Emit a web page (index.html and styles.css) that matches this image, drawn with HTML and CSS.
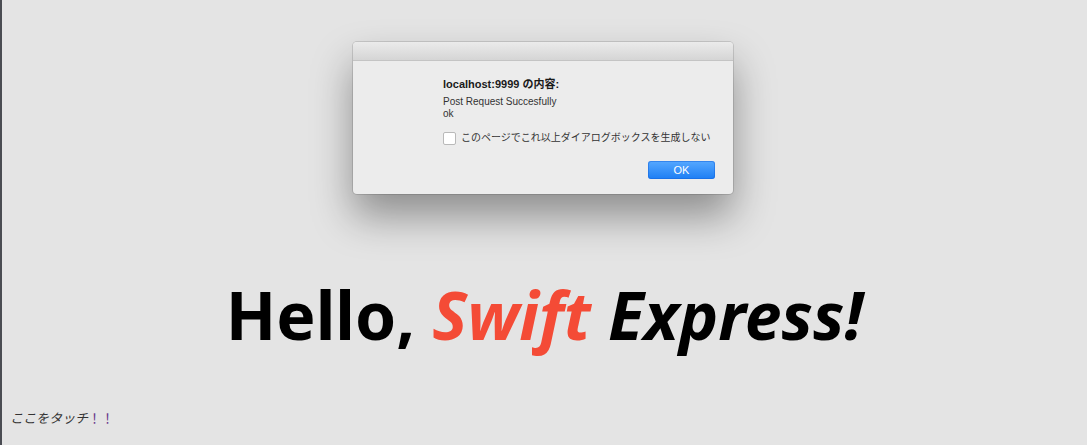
FILE: index.html
```html
<!DOCTYPE html>
<html lang="ja">
<head>
<meta charset="utf-8">
<title>Hello, Swift Express!</title>
<link rel="stylesheet" href="styles.css">
</head>
<body>
<div class="page">
  <main class="stage">
    <h1 class="headline">Hello, <em class="swift">Swift</em> <em>Express!</em></h1>
  </main>
  <p class="touch">ここをタッチ<span class="bang">！！</span></p>
</div>

<div class="dialog" role="alertdialog">
  <div class="titlebar"></div>
  <div class="dialog-body">
    <div class="dialog-title">localhost:9999 の内容:</div>
    <div class="dialog-msg">Post Request Succesfully<br>ok</div>
    <label class="check-row"><span class="checkbox"></span><span>このページでこれ以上ダイアログボックスを生成しない</span></label>
    <div class="actions"><button class="ok">OK</button></div>
  </div>
</div>
</body>
</html>
```

FILE: styles.css
```css
html, body {
  margin: 0;
  padding: 0;
  height: 100%;
}
body {
  background: #e4e4e4;
  font-family: "Liberation Sans", "Noto Sans CJK JP", sans-serif;
  overflow: hidden;
}
.page {
  height: 445px;
  display: flex;
  flex-direction: column;
  border-left: 2px solid #4a4c52;
  box-sizing: border-box;
}
.stage {
  flex: 1;
  display: flex;
  justify-content: center;
  padding-top: 274px;
}
.headline {
  margin: 0;
  font-family: "Noto Sans", "Lato", sans-serif;
  font-weight: 700;
  font-size: 66px;
  line-height: 80px;
  color: #000;
  letter-spacing: 0;
  height: 80px;
}
.headline em {
  font-style: italic;
}
.swift {
  color: #f44b36;
}
.touch {
  margin: 0 0 18px 8px;
  font-size: 13px;
  line-height: 16px;
  color: #333;
  font-style: italic;
}
.bang {
  color: #6a3a8c;
  font-style: normal;
}

.dialog {
  position: absolute;
  left: 353px;
  top: 42px;
  width: 380px;
  height: 152px;
  background: #ececec;
  border-radius: 4px;
  box-shadow: 0 0 0 1px rgba(0,0,0,0.12), 0 22px 40px rgba(0,0,0,0.38);
  overflow: hidden;
  display: flex;
  flex-direction: column;
}
.titlebar {
  height: 18px;
  background: linear-gradient(#ebebeb, #d5d5d5);
  border-bottom: 1px solid #c4c4c4;
}
.dialog-body {
  padding: 16px 18px 0 90px;
  display: flex;
  flex-direction: column;
}
.dialog-title {
  font-size: 11px;
  font-weight: 700;
  color: #1a1a1a;
  line-height: 14px;
}
.dialog-msg {
  margin-top: 5px;
  font-size: 10px;
  line-height: 12px;
  color: #333;
}
.check-row {
  margin-top: 11px;
  display: flex;
  align-items: center;
  gap: 5px;
  font-size: 10px;
  color: #333;
  line-height: 14px;
  white-space: nowrap;
}
.checkbox {
  flex: none;
  width: 11px;
  height: 11px;
  background: #fff;
  border: 1px solid #b9b9b9;
  border-radius: 2px;
}
.actions {
  margin-top: 16px;
  display: flex;
  justify-content: flex-end;
}
.ok {
  width: 67px;
  height: 18px;
  border: none;
  border-radius: 3px;
  background: linear-gradient(#56a8ff, #1d7ef4);
  box-shadow: inset 0 0 0 1px rgba(20,100,220,0.5);
  color: #fff;
  font-family: "Liberation Sans", sans-serif;
  font-size: 11px;
  padding: 0;
}
```
